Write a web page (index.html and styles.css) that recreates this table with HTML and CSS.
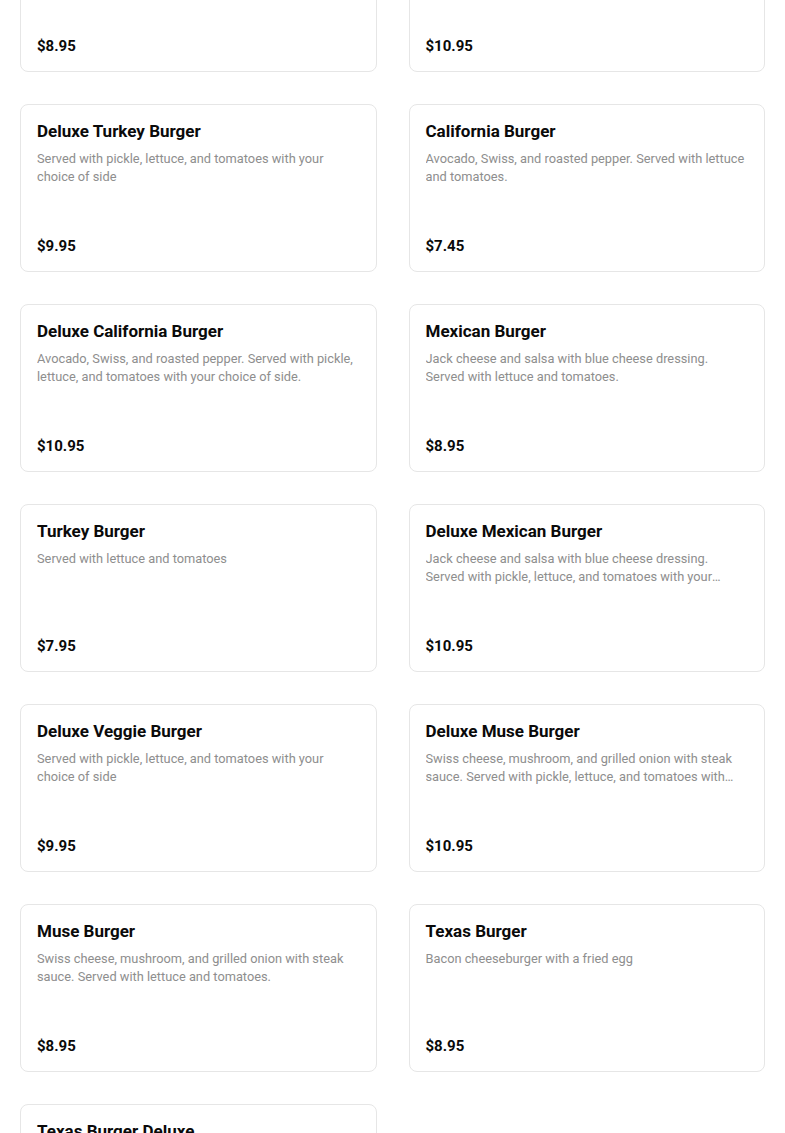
FILE: index.html
```html
<!DOCTYPE html>
<html lang="en">
<head>
  <meta charset="UTF-8" />
  <title>Burgers</title>
  <link rel="stylesheet" href="styles.css">
</head>
<body>
  <div class="menu">
    <div class="item">
      <h4>Classic Burger</h4>
      <p>Served with lettuce and tomatoes</p>
      <span class="price">$8.95</span>
    </div>
    <div class="item">
      <h4>Deluxe Classic Burger</h4>
      <p>Served with pickle, lettuce, and tomatoes with your choice of side</p>
      <span class="price">$10.95</span>
    </div>

    <div class="item">
      <h4>Deluxe Turkey Burger</h4>
      <p>Served with pickle, lettuce, and tomatoes with your choice of side</p>
      <span class="price">$9.95</span>
    </div>
    <div class="item">
      <h4>California Burger</h4>
      <p>Avocado, Swiss, and roasted pepper. Served with lettuce and tomatoes.</p>
      <span class="price">$7.45</span>
    </div>

    <div class="item">
      <h4>Deluxe California Burger</h4>
      <p>Avocado, Swiss, and roasted pepper. Served with pickle, lettuce, and tomatoes with your choice of side.</p>
      <span class="price">$10.95</span>
    </div>
    <div class="item">
      <h4>Mexican Burger</h4>
      <p>Jack cheese and salsa with blue cheese dressing. Served with lettuce and tomatoes.</p>
      <span class="price">$8.95</span>
    </div>

    <div class="item">
      <h4>Turkey Burger</h4>
      <p>Served with lettuce and tomatoes</p>
      <span class="price">$7.95</span>
    </div>
    <div class="item">
      <h4>Deluxe Mexican Burger</h4>
      <p>Jack cheese and salsa with blue cheese dressing. Served with pickle, lettuce, and tomatoes with your choice of side.</p>
      <span class="price">$10.95</span>
    </div>

    <div class="item">
      <h4>Deluxe Veggie Burger</h4>
      <p>Served with pickle, lettuce, and tomatoes with your choice of side</p>
      <span class="price">$9.95</span>
    </div>
    <div class="item">
      <h4>Deluxe Muse Burger</h4>
      <p>Swiss cheese, mushroom, and grilled onion with steak sauce. Served with pickle, lettuce, and tomatoes with your choice of side.</p>
      <span class="price">$10.95</span>
    </div>

    <div class="item">
      <h4>Muse Burger</h4>
      <p>Swiss cheese, mushroom, and grilled onion with steak sauce. Served with lettuce and tomatoes.</p>
      <span class="price">$8.95</span>
    </div>
    <div class="item">
      <h4>Texas Burger</h4>
      <p>Bacon cheeseburger with a fried egg</p>
      <span class="price">$8.95</span>
    </div>

    <div class="item">
      <h4>Texas Burger Deluxe</h4>
      <p>Bacon cheeseburger with a fried egg. Served with pickle, lettuce, and tomatoes with your choice of side.</p>
      <span class="price">$10.95</span>
    </div>
  </div>
</body>
</html>
```

FILE: styles.css
```css
*, *::before, *::after {
  box-sizing: border-box;
}
html, body {
  height: 100%;
  overflow: hidden;
}
body {
  margin: 0;
  font-family: Roboto, 'Liberation Sans', sans-serif;
  background: #fff;
  color: #111;
}

/* page is scrolled part-way down the list */
.menu {
  display: grid;
  grid-template-columns: 1fr 1fr;
  gap: 32px;
  padding: 0 20px;
  margin-top: -96px;
}

.item {
  height: 168px;
  display: flex;
  flex-direction: column;
  padding: 16px;
  border: 1px solid #e6e6e6;
  border-radius: 8px;
  background: #fff;
}

.item h4 {
  margin: 0;
  font-size: 17px;
  line-height: 20px;
  font-weight: 700;
  color: #0a0a0a;
}

.item p {
  margin: 9px 0 0;
  font-size: 12.8px;
  line-height: 18px;
  color: #8e8e8e;
  display: -webkit-box;
  -webkit-line-clamp: 2;
  -webkit-box-orient: vertical;
  overflow: hidden;
}

.price {
  margin-top: auto;
  font-size: 15px;
  line-height: 18px;
  font-weight: 700;
  color: #0a0a0a;
}
```
